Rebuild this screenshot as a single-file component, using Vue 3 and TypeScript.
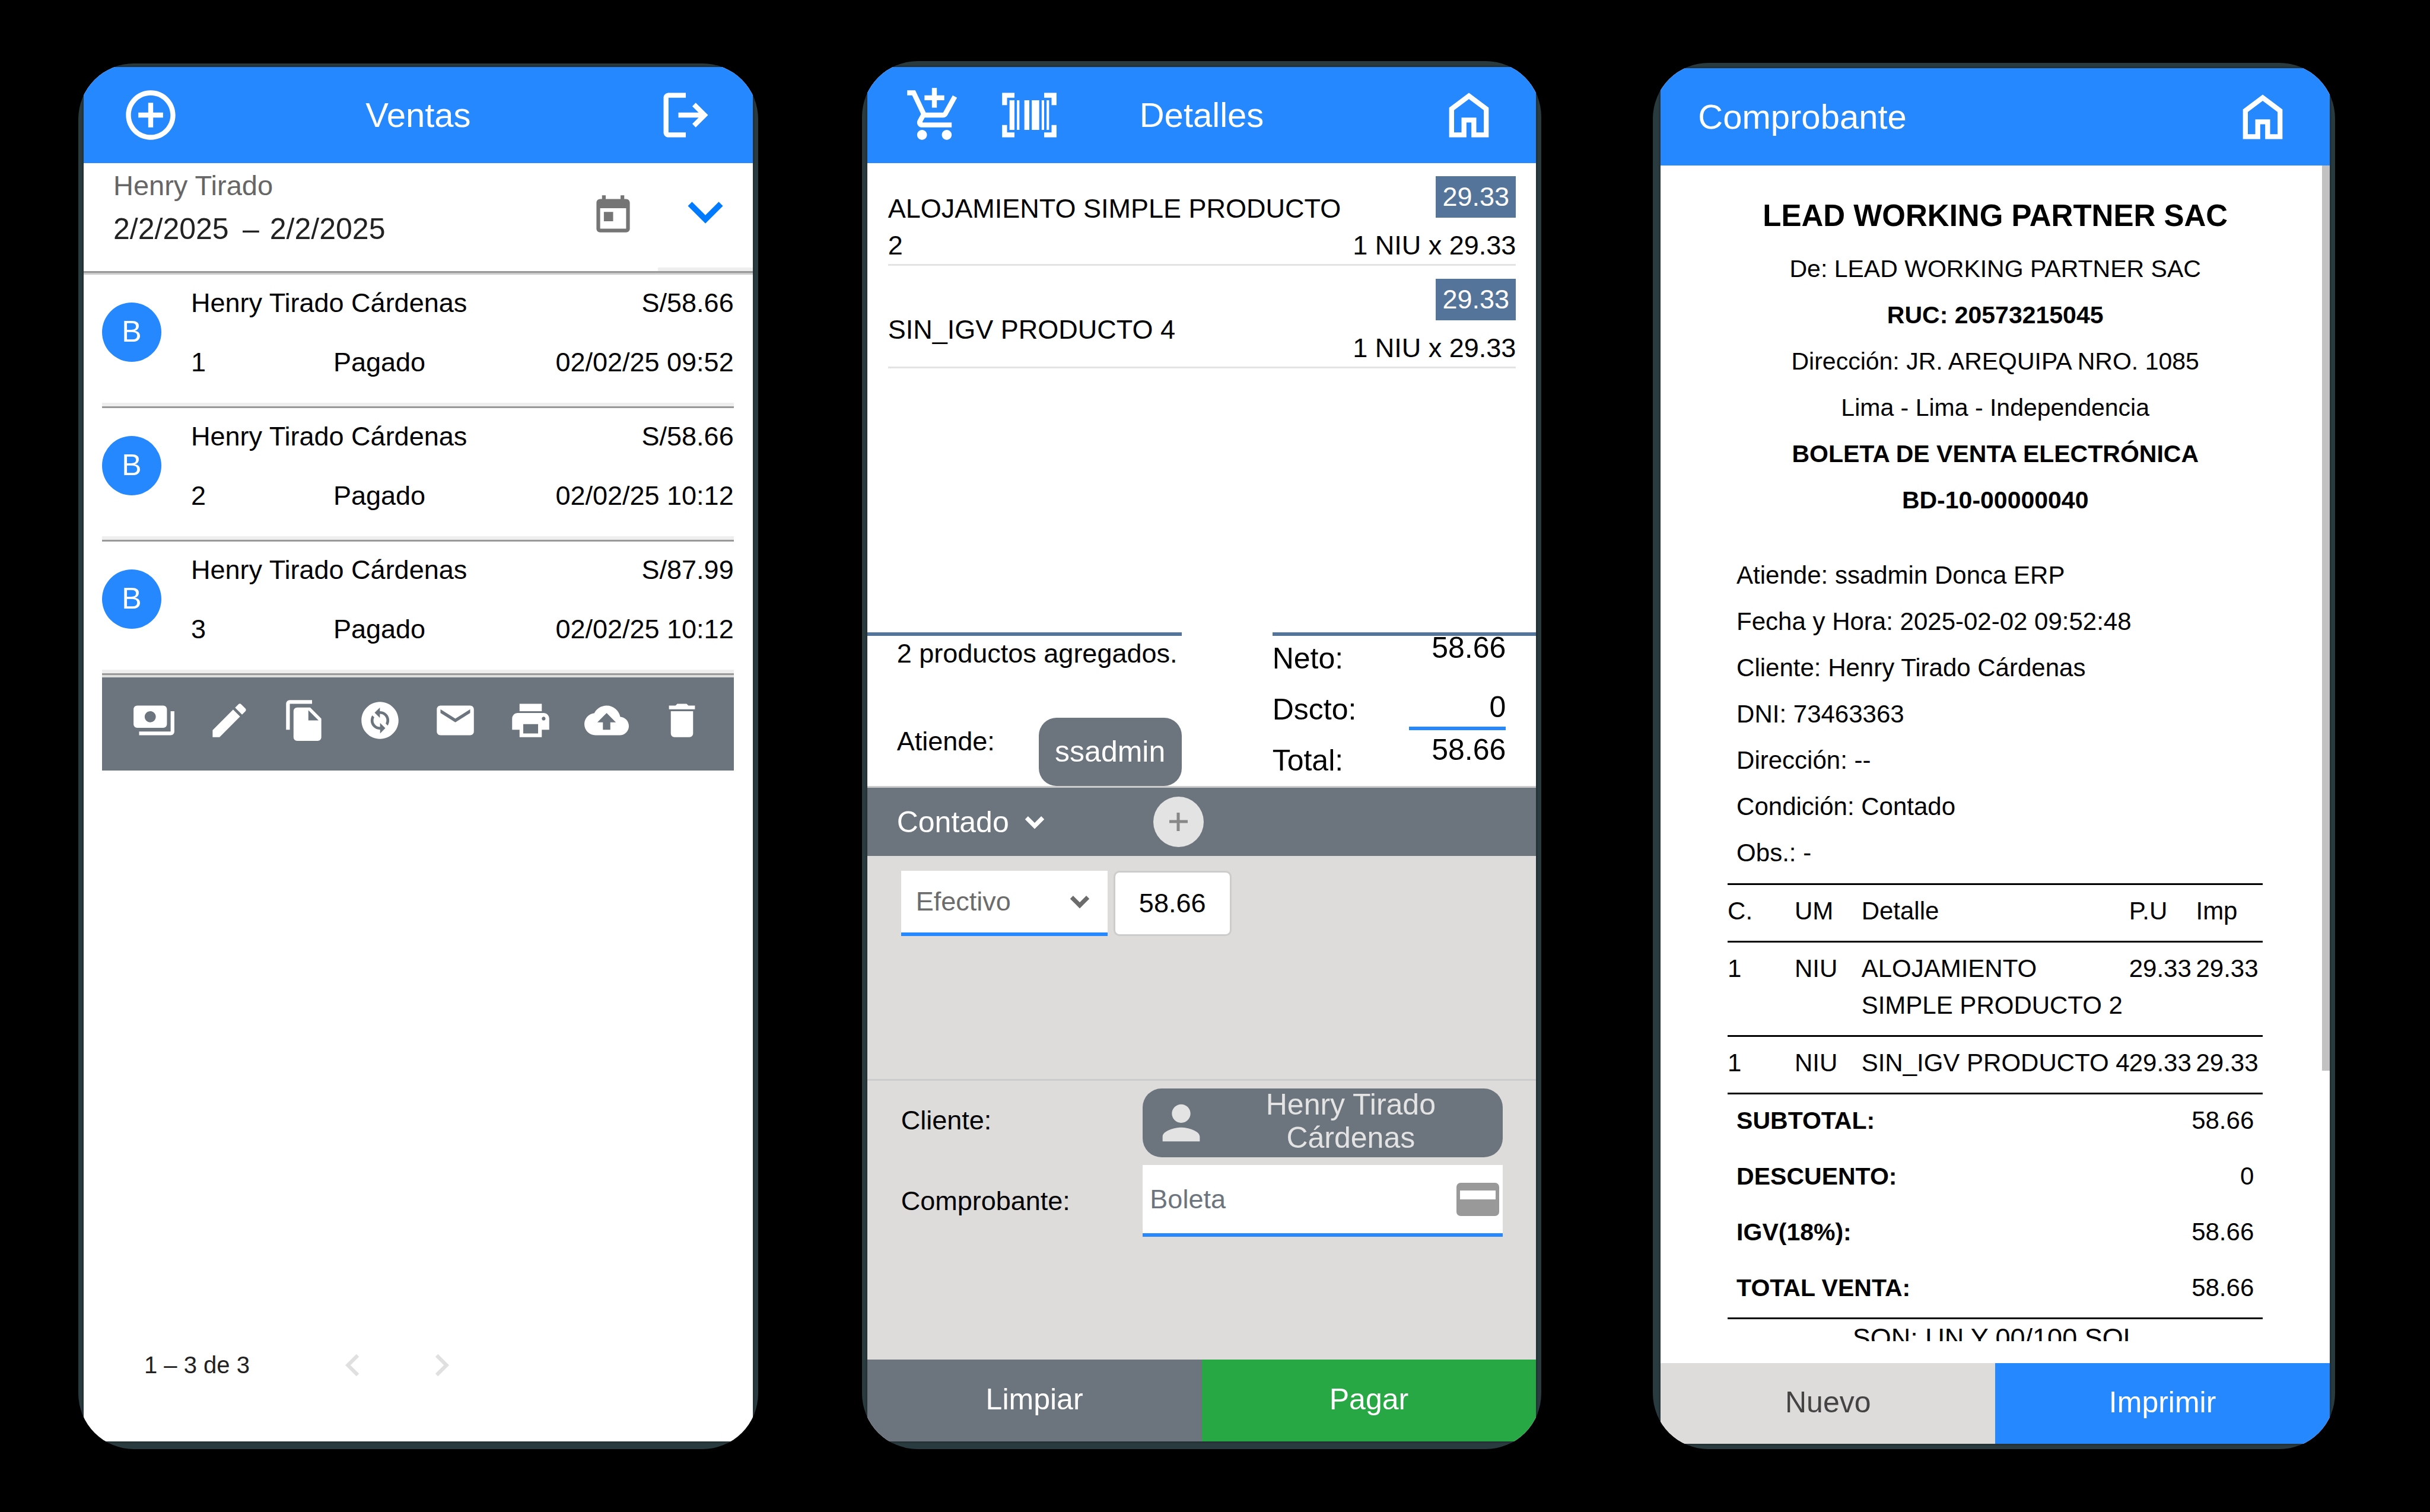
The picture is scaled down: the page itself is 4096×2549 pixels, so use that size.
<script setup lang="ts">
import { ref } from 'vue'

interface Sale {
  number: number
  customer: string
  amount: string
  status: string
  date: string
}

interface Product {
  name: string
  total: string
  detail: string
}

const sales: Sale[] = [
  { number: 1, customer: 'Henry Tirado Cárdenas', amount: 'S/58.66', status: 'Pagado', date: '02/02/25 09:52' },
  { number: 2, customer: 'Henry Tirado Cárdenas', amount: 'S/58.66', status: 'Pagado', date: '02/02/25 10:12' },
  { number: 3, customer: 'Henry Tirado Cárdenas', amount: 'S/87.99', status: 'Pagado', date: '02/02/25 10:12' },
]

const products: Product[] = [
  { name: 'ALOJAMIENTO SIMPLE PRODUCTO 2', total: '29.33', detail: '1 NIU x 29.33' },
  { name: 'SIN_IGV PRODUCTO 4', total: '29.33', detail: '1 NIU x 29.33' },
]

const icons = {
  add: 'M13 7h-2v4H7v2h4v4h2v-4h4v-2h-4V7zm-1-5C6.48 2 2 6.48 2 12s4.48 10 10 10 10-4.48 10-10S17.52 2 12 2zm0 18c-4.41 0-8-3.59-8-8s3.59-8 8-8 8 3.59 8 8-3.59 8-8 8z',
  logout: 'M16 17l-1.375-1.45L17.175 13H9v-2h8.175l-2.55-2.55L16 7l5 5zM5 5h7V3H5c-1.1 0-2 .9-2 2v14c0 1.1.9 2 2 2h7v-2H5V5z',
  calendar: 'M19 3h-1V1h-2v2H8V1H6v2H5c-1.11 0-1.99.9-1.99 2L3 19c0 1.1.89 2 2 2h14c1.1 0 2-.9 2-2V5c0-1.1-.9-2-2-2zm0 16H5V8h14v11zM7 10h5v5H7z',
  down: 'M7.41 8.59L12 13.17l4.59-4.58L18 10l-6 6-6-6z',
  previous: 'M15.41 7.41L14 6l-6 6 6 6 1.41-1.41L10.83 12z',
  next: 'M10 6L8.59 7.41 13.17 12l-4.58 4.59L10 18l6-6z',
  cart: 'M11 9h2V6h3V4h-3V1h-2v3H8v2h3v3zm-4 9c-1.1 0-1.99.9-1.99 2S5.9 22 7 22s2-.9 2-2-.9-2-2-2zm10 0c-1.1 0-1.99.9-1.99 2s.89 2 1.99 2 2-.9 2-2-.9-2-2-2zm-9.83-3.25l.03-.12.9-1.63h7.45c.75 0 1.41-.41 1.75-1.03l3.86-7.01L19.42 4h-.01l-1.1 2-2.76 5H8.53l-.13-.27L6.16 6l-.95-2-.94-2H1v2h2l3.6 7.59-1.35 2.45c-.16.28-.25.61-.25.96 0 1.1.9 2 2 2h12v-2H7.42c-.13 0-.25-.11-.25-.25z',
  barcode: 'M1 3h5v2H3v3H1zM18 3h5v5h-2V5h-3zM1 16h2v3h3v2H1zM21 16h2v5h-5v-2h3zM4 6h2v12H4zM7 6h1v12H7zM10 6h2v12h-2zM13 6h3v12h-3zM17 6h1v12h-1zM19 6h1v12h-1z',
  home: 'M6 19h3v-6h6v6h3v-9l-6-4.5L6 10v9zm-2 2V9l8-6 8 6v12h-7v-6h-2v6H4z',
  person: 'M12 12c2.21 0 4-1.79 4-4s-1.79-4-4-4-4 1.79-4 4 1.79 4 4 4zm0 2c-2.67 0-8 1.34-8 4v2h16v-2c0-2.66-5.33-4-8-4z',
}

const actions = [
  { label: 'Pagos', path: 'M19 14V6c0-1.1-.9-2-2-2H3c-1.1 0-2 .9-2 2v8c0 1.1.9 2 2 2h14c1.1 0 2-.9 2-2zm-9-1c-1.66 0-3-1.34-3-3s1.34-3 3-3 3 1.34 3 3-1.34 3-3 3zm13-6v11c0 1.1-.9 2-2 2H4v-2h17V7h2z' },
  { label: 'Editar', path: 'M3 17.25V21h3.75L17.81 9.94l-3.75-3.75L3 17.25zM20.71 7.04c.39-.39.39-1.02 0-1.41l-2.34-2.34c-.39-.39-1.02-.39-1.41 0l-1.83 1.83 3.75 3.75 1.83-1.83z' },
  { label: 'Copiar', path: 'M16 1H4c-1.1 0-2 .9-2 2v14h2V3h12V1zm-1 4l6 6v10c0 1.1-.9 2-2 2H7.99C6.89 23 6 22.1 6 21l.01-14c0-1.1.89-2 1.99-2h7zm-1 7h5.5L14 6.5V12z' },
  { label: 'Convertir', path: 'M12 2C6.48 2 2 6.48 2 12c0 5.52 4.48 10 10 10s10-4.48 10-10C22 6.48 17.52 2 12 2zM12.06 19v-2.01c-.02 0-.04 0-.06 0-1.28 0-2.56-.49-3.54-1.46-1.71-1.71-1.92-4.35-.64-6.29l1.1 1.1c-.71 1.33-.53 3.01.59 4.13.7.7 1.62 1.03 2.54 1.01v-2.14l2.83 2.83L12.06 19zM16.17 14.76l-1.1-1.1c.71-1.33.53-3.01-.59-4.13C13.79 8.84 12.9 8.5 12 8.5c-.02 0-.04 0-.06 0v2.15L9.11 7.83 11.94 5v2.02c1.3-.02 2.61.45 3.6 1.45 1.7 1.7 1.91 4.35.63 6.29z' },
  { label: 'Enviar por correo', path: 'M20 4H4c-1.1 0-1.99.9-1.99 2L2 18c0 1.1.9 2 2 2h16c1.1 0 2-.9 2-2V6c0-1.1-.9-2-2-2zm0 4l-8 5-8-5V6l8 5 8-5v2z' },
  { label: 'Imprimir', path: 'M19 8H5c-1.66 0-3 1.34-3 3v6h4v4h12v-4h4v-6c0-1.66-1.34-3-3-3zm-3 11H8v-5h8v5zm3-7c-.55 0-1-.45-1-1s.45-1 1-1 1 .45 1 1-.45 1-1 1zm-1-9H6v4h12V3z' },
  { label: 'Subir', path: 'M19.35 10.04C18.67 6.59 15.64 4 12 4 9.11 4 6.6 5.64 5.35 8.04 2.34 8.36 0 10.91 0 14c0 3.31 2.69 6 6 6h13c2.76 0 5-2.24 5-5 0-2.64-2.05-4.78-4.65-4.96zM14 13v4h-4v-4H7l5-5 5 5h-3z' },
  { label: 'Eliminar', path: 'M6 19c0 1.1.9 2 2 2h8c1.1 0 2-.9 2-2V7H6v12zM19 4h-3.5l-1-1h-5l-1 1H5v2h14V4z' },
]

const heading = [
  { text: 'De: LEAD WORKING PARTNER SAC', strong: false },
  { text: 'RUC: 20573215045', strong: true },
  { text: 'Dirección: JR. AREQUIPA NRO. 1085', strong: false },
  { text: 'Lima - Lima - Independencia', strong: false },
  { text: 'BOLETA DE VENTA ELECTRÓNICA', strong: true },
  { text: 'BD-10-00000040', strong: true },
]

const info = [
  'Atiende: ssadmin Donca ERP',
  'Fecha y Hora: 2025-02-02 09:52:48',
  'Cliente: Henry Tirado Cárdenas',
  'DNI: 73463363',
  'Dirección: --',
  'Condición: Contado',
  'Obs.: -',
]

const lines = [
  ['1', 'NIU', 'ALOJAMIENTO\nSIMPLE PRODUCTO 2', '29.33', '29.33'],
  ['1', 'NIU', 'SIN_IGV PRODUCTO 4', '29.33', '29.33'],
]

const totals = [
  { label: 'SUBTOTAL:', value: '58.66' },
  { label: 'DESCUENTO:', value: '0' },
  { label: 'IGV(18%):', value: '58.66' },
  { label: 'TOTAL VENTA:', value: '58.66' },
]

const dateFrom = ref('2/2/2025')
const dateTo = ref('2/2/2025')
const condition = ref('Contado')
const method = ref('Efectivo')
const paid = ref('58.66')
const voucher = ref('Boleta')
</script>

<template>
  <main class="page">
    <section class="phone phone-sales">
      <div class="screen">
        <header class="topbar">
          <div class="side">
            <button class="icon-btn" aria-label="Nueva venta"><svg class="i-lg" viewBox="0 0 24 24"><path :d="icons.add" /></svg></button>
          </div>
          <h1>Ventas</h1>
          <div class="side end">
            <button class="icon-btn" aria-label="Salir"><svg class="i-lg" viewBox="0 0 24 24"><path :d="icons.logout" /></svg></button>
          </div>
        </header>

        <div class="filter">
          <div class="filter-text">
            <label for="date-from">Henry Tirado</label>
            <div class="range">
              <input id="date-from" v-model="dateFrom" type="text" />
              <span>–</span>
              <input v-model="dateTo" type="text" aria-label="Fecha final" />
            </div>
          </div>
          <button class="icon-btn calendar" aria-label="Elegir fechas"><svg class="i-md" viewBox="0 0 24 24"><path :d="icons.calendar" /></svg></button>
          <button class="icon-btn expand" aria-label="Más filtros"><svg class="i-xl" viewBox="0 0 24 24"><path :d="icons.down" /></svg></button>
        </div>

        <ul class="sales">
          <li v-for="sale in sales" :key="sale.number">
            <span class="avatar">B</span>
            <div class="sale">
              <div class="sale-line"><span>{{ sale.customer }}</span><span class="right">{{ sale.amount }}</span></div>
              <div class="sale-line"><span class="num">{{ sale.number }}</span><span>{{ sale.status }}</span><span class="right">{{ sale.date }}</span></div>
            </div>
          </li>
        </ul>

        <div class="actions">
          <button v-for="action in actions" :key="action.label" class="icon-btn" :aria-label="action.label">
            <svg class="i-md" viewBox="0 0 24 24"><path :d="action.path" /></svg>
          </button>
        </div>

        <footer class="pager">
          <span>1 – 3 de 3</span>
          <button class="icon-btn" aria-label="Anterior"><svg class="i-md" viewBox="0 0 24 24"><path :d="icons.previous" /></svg></button>
          <button class="icon-btn" aria-label="Siguiente"><svg class="i-md" viewBox="0 0 24 24"><path :d="icons.next" /></svg></button>
        </footer>
      </div>
    </section>

    <section class="phone phone-detail">
      <div class="screen">
        <header class="topbar">
          <div class="side">
            <button class="icon-btn" aria-label="Agregar producto"><svg class="i-lg" viewBox="0 0 24 24"><path :d="icons.cart" /></svg></button>
            <button class="icon-btn" aria-label="Escanear código"><svg class="i-lg" viewBox="0 0 24 24"><path :d="icons.barcode" /></svg></button>
          </div>
          <h1>Detalles</h1>
          <div class="side end">
            <button class="icon-btn" aria-label="Inicio"><svg class="i-lg" viewBox="0 0 24 24"><path :d="icons.home" /></svg></button>
          </div>
        </header>

        <ul class="products">
          <li v-for="product in products" :key="product.name">
            <span class="product-name">{{ product.name }}</span>
            <div class="product-price">
              <span class="badge">{{ product.total }}</span>
              <span>{{ product.detail }}</span>
            </div>
          </li>
        </ul>

        <div class="summary">
          <div class="summary-left">
            <span>2 productos agregados.</span>
            <div class="attend">
              <span>Atiende:</span>
              <button class="pill">ssadmin</button>
            </div>
          </div>
          <div class="summary-right">
            <div class="labels"><span>Neto:</span><span>Dscto:</span><span>Total:</span></div>
            <div class="values"><span>58.66</span><span class="discount">0</span><span>58.66</span></div>
          </div>
        </div>

        <div class="condition">
          <div class="select-wrap">
            <select v-model="condition" aria-label="Condición de pago"><option>Contado</option></select>
            <svg class="i-sm" viewBox="0 0 24 24"><path :d="icons.down" /></svg>
          </div>
          <button class="plus" aria-label="Agregar pago"><svg viewBox="0 0 85 85"><path d="M42 27v31M27 42h31" /></svg></button>
        </div>

        <div class="payments">
          <div class="select-wrap method">
            <select v-model="method" aria-label="Medio de pago"><option>Efectivo</option></select>
            <svg class="i-sm" viewBox="0 0 24 24"><path :d="icons.down" /></svg>
          </div>
          <input v-model="paid" class="paid" type="text" aria-label="Monto" />
        </div>

        <div class="client">
          <span class="client-label">Cliente:</span>
          <button class="client-btn">
            <svg viewBox="0 0 24 24"><path :d="icons.person" /></svg>
            <span>Henry Tirado Cárdenas</span>
          </button>
          <label for="voucher">Comprobante:</label>
          <div class="voucher">
            <input id="voucher" v-model="voucher" type="text" />
            <svg viewBox="0 0 74 56"><rect x="1" width="72" height="56" rx="7" /><path d="M7 13h60v15H7z" fill="#fff" /></svg>
          </div>
        </div>

        <footer class="buttons">
          <button class="grey">Limpiar</button>
          <button class="green">Pagar</button>
        </footer>
      </div>
    </section>

    <section class="phone phone-receipt">
      <div class="screen">
        <header class="topbar left">
          <h1>Comprobante</h1>
          <button class="icon-btn" aria-label="Inicio"><svg class="i-lg" viewBox="0 0 24 24"><path :d="icons.home" /></svg></button>
        </header>

        <div class="viewport">
          <article class="receipt">
            <h2>LEAD WORKING PARTNER SAC</h2>
            <p v-for="row in heading" :key="row.text" :class="{ strong: row.strong }">{{ row.text }}</p>
            <div class="info">
              <p v-for="row in info" :key="row">{{ row }}</p>
            </div>
            <table>
              <thead>
                <tr><th class="c1">C.</th><th class="c1">UM</th><th class="c4">Detalle</th><th class="c1">P.U</th><th class="c1">Imp</th></tr>
              </thead>
              <tbody>
                <tr v-for="line in lines" :key="line[2]"><td v-for="(cell, i) in line" :key="i">{{ cell }}</td></tr>
              </tbody>
            </table>
            <dl>
              <div v-for="total in totals" :key="total.label"><dt>{{ total.label }}</dt><dd>{{ total.value }}</dd></div>
            </dl>
            <p class="words">SON: UN Y 00/100 SOL</p>
          </article>
          <div class="thumb"></div>
        </div>

        <footer class="buttons">
          <button class="light">Nuevo</button>
          <button class="blue">Imprimir</button>
        </footer>
      </div>
    </section>
  </main>
</template>

<style>
body {
  margin: 0;
  background: #000;
}
</style>

<style scoped>
* {
  box-sizing: border-box;
}

.page {
  display: flex;
  min-height: 100vh;
  padding: 103px 160px 106px 132px;
  background: #000;
  color: #000;
  font-family: "Liberation Sans", Arial, sans-serif;
  font-size: 45px;
  line-height: 60px;
}

button,
input,
select {
  margin: 0;
  padding: 0;
  border: 0;
  border-radius: 0;
  background: none;
  color: inherit;
  font: inherit;
}

ul,
h1,
h2,
p,
dl,
dd {
  margin: 0;
  padding: 0;
  list-style: none;
}

svg {
  display: block;
  flex: none;
  fill: currentColor;
}

/* Device frame */
.phone {
  display: flex;
  flex: 1 1 0;
  min-width: 0;
  overflow: hidden;
  border-radius: 94px;
  background: #2a3b40;
}

.phone-sales {
  margin: 4px 175px 0 0;
  padding: 6px 9px 13px;
}

.phone-detail {
  margin-right: 188px;
  padding: 10px 9px 13px;
}

.phone-receipt {
  flex-basis: 3px;
  margin-top: 3px;
  padding: 9px 9px 9px 13px;
}

.screen {
  display: flex;
  flex: 1;
  flex-direction: column;
  min-width: 0;
  background: #fff;
  box-shadow: 0 0 0 3px #263336;
}

.topbar {
  display: grid;
  flex: none;
  grid-template-columns: 1fr auto 1fr;
  align-items: center;
  height: 162px;
  padding: 0 63px;
  background: #2688ff;
  color: #fff;
}

.topbar.left {
  grid-template-columns: 1fr auto;
}

.topbar h1 {
  font-size: 58px;
  font-weight: 400;
}

.side {
  display: flex;
  gap: 60px;
}

.side.end {
  justify-content: flex-end;
}

.icon-btn {
  display: flex;
  align-items: center;
  justify-content: center;
}

.i-sm {
  width: 58px;
  height: 58px;
}

.i-sm path {
  stroke: currentColor;
  stroke-width: 1;
}

.i-md {
  width: 75px;
  height: 75px;
}

.i-lg {
  width: 100px;
  height: 100px;
}

.i-xl {
  width: 118px;
  height: 118px;
}

/* Sales list */
.filter {
  display: flex;
  flex: none;
  height: 185px;
  margin-bottom: 3px;
  padding-left: 50px;
  border-bottom: 3px solid #999;
  box-shadow: 0 3px #ccc;
}

.filter-text {
  display: flex;
  flex: 1;
  flex-direction: column;
  gap: 13px;
  min-width: 0;
  padding-top: 8px;
}

.filter-text label {
  color: #666;
  font-size: 47px;
}

.range {
  display: flex;
  gap: 18px;
  color: #222;
  font-size: 50px;
}

.range input {
  width: 200px;
  height: 60px;
}

.calendar {
  margin-right: 38px;
  padding-bottom: 6px;
  color: #757575;
}

.expand {
  width: 160px;
  padding-bottom: 18px;
  box-shadow: inset 0 -6px #eee;
  color: #007bff;
}

.sales {
  margin: 0 32px 0 31px;
}

.sales li {
  display: flex;
  gap: 50px;
  height: 225px;
  border-bottom: 3px solid #999;
  box-shadow: inset 0 -6px #eee;
}

.avatar {
  width: 100px;
  height: 100px;
  margin-top: 47px;
  border-radius: 50%;
  background: #2688ff;
  color: #fff;
  font-size: 50px;
  line-height: 98px;
  text-align: center;
}

.sale {
  display: flex;
  flex: 1;
  flex-direction: column;
  gap: 40px;
  padding-top: 18px;
}

.sale-line {
  display: flex;
}

.num {
  width: 240px;
}

.right {
  margin-left: auto;
}

.actions {
  display: flex;
  justify-content: space-between;
  height: 161px;
  margin: 0 32px 0 31px;
  padding: 0 50px 12px;
  border-top: 4px solid #ddd;
  background: #6c757d;
  color: #fff;
}

.pager {
  display: flex;
  align-items: center;
  margin-top: auto;
  padding: 0 0 54px 102px;
  color: #222;
  font-size: 40px;
}

.pager span {
  width: 276px;
}

.pager button {
  width: 150px;
  height: 150px;
  color: #e0e0e0;
}

/* Sale detail */
.products {
  flex: 1;
  padding: 0 34px 0 35px;
}

.products li {
  display: grid;
  grid-template-columns: 1fr auto;
  align-items: center;
  padding-top: 22px;
  border-bottom: 3px solid #e3e3e3;
}

.product-name {
  padding-top: 24px;
  line-height: 62px;
}

.product-price {
  display: flex;
  flex-direction: column;
  gap: 16px;
  align-items: flex-end;
  line-height: 62px;
}

.badge {
  width: 135px;
  height: 70px;
  background: #55749a;
  color: #fff;
  line-height: 70px;
  text-align: center;
}

.summary {
  display: flex;
  gap: 153px;
  height: 262px;
  border-bottom: 3px solid #ccc;
}

.summary-left {
  display: flex;
  flex-direction: column;
  justify-content: space-between;
  width: 530px;
  padding-left: 50px;
  border-top: 6px solid #55749a;
}

.attend {
  display: flex;
  justify-content: space-between;
}

.attend span {
  padding-top: 10px;
}

.pill {
  width: 241px;
  height: 115px;
  padding-bottom: 2px;
  border-radius: 30px;
  background: #6c757d;
  color: #fff;
  font-size: 50px;
}

.summary-right {
  display: flex;
  flex: 1;
  justify-content: space-between;
  padding-right: 51px;
  border-top: 6px solid #55749a;
  font-size: 50px;
}

.labels,
.values {
  display: flex;
  flex-direction: column;
}

.labels {
  gap: 10px;
  line-height: 76px;
}

.values {
  width: 163px;
  line-height: 40px;
  text-align: right;
}

.discount {
  margin: 60px 0 13px;
  padding-bottom: 13px;
  border-bottom: 6px solid #2688ff;
}

.condition {
  display: flex;
  gap: 171px;
  align-items: center;
  height: 115px;
  padding-left: 50px;
  background: #6c757d;
  color: #fff;
  font-size: 50px;
}

.select-wrap {
  position: relative;
  width: 261px;
}

.select-wrap select {
  display: block;
  width: 100%;
  height: 100%;
  appearance: none;
}

.select-wrap svg {
  position: absolute;
  top: calc(50% - 29px);
  right: 0;
  pointer-events: none;
}

.plus {
  width: 85px;
  height: 85px;
  border-radius: 50%;
  background: #e3e3e3;
}

.plus path {
  fill: none;
  stroke: #888;
  stroke-width: 5;
}

.payments {
  display: flex;
  gap: 10px;
  height: 376px;
  padding: 25px 57px;
  background: #dddcda;
}

.method {
  width: 348px;
  height: 110px;
  padding-left: 25px;
  border-bottom: 6px solid #2688ff;
  background: #fff;
  color: #6c6c6c;
}

.method svg {
  right: 18px;
}

.paid {
  width: 199px;
  height: 110px;
  border: 3px solid #ccc;
  border-radius: 10px;
  background: #fff;
  text-align: center;
}

.client {
  display: grid;
  grid-template-columns: 1fr 607px;
  gap: 13px 0;
  align-content: start;
  align-items: center;
  height: 473px;
  padding: 13px 56px 0 57px;
  border-top: 3px solid #ccc;
  background: #dddcda;
}

.client-label {
  padding-bottom: 8px;
}

.client-btn {
  display: flex;
  align-items: center;
  height: 116px;
  padding: 0 18px;
  border-radius: 32px;
  background: #6c757d;
  color: #e3e3e3;
  font-size: 50px;
  line-height: 56px;
}

.client-btn svg {
  width: 94px;
  height: 94px;
}

.client-btn span {
  flex: 1;
  padding-bottom: 6px;
}

.voucher {
  position: relative;
  height: 121px;
}

.voucher input {
  width: 100%;
  height: 100%;
  padding-left: 12px;
  border-bottom: 6px solid #2688ff;
  background: #fff;
  color: #6c757d;
}

.voucher svg {
  position: absolute;
  top: 30px;
  right: 5px;
  width: 74px;
  height: 56px;
  fill: #999;
}

.buttons {
  display: flex;
  flex: none;
  height: 138px;
  font-size: 50px;
}

.buttons button {
  flex: 1;
  padding-bottom: 4px;
}

.grey {
  background: #6c757d;
  color: #fff;
}

.green {
  background: #28a745;
  color: #fff;
}

.light {
  background: #dddcda;
  color: #444;
}

.blue {
  background: #2688ff;
  color: #fff;
}

/* Receipt */
.phone-receipt .topbar {
  height: 164px;
}

.phone-receipt .buttons {
  height: 136px;
}

.viewport {
  position: relative;
  flex: 1 1 0;
  min-height: 0;
  margin-bottom: 37px;
  overflow: hidden;
}

.thumb {
  position: absolute;
  top: 0;
  right: 0;
  width: 13px;
  height: 77%;
  background: #c1c1c1;
}

.receipt {
  padding: 46px 10%;
  font-size: 41px;
  line-height: 78px;
  text-align: center;
}

.receipt h2 {
  margin-bottom: 11px;
  font-size: 51px;
  font-weight: 700;
}

.strong {
  font-weight: 700;
}

.info {
  padding: 49px 14px 12px 15px;
  font-size: 42px;
  text-align: left;
}

table {
  width: 100%;
  border-top: 3px solid #000;
  border-collapse: separate;
  border-spacing: 0;
  font-size: 42px;
  line-height: 62px;
  table-layout: fixed;
  text-align: left;
}

th,
td {
  padding: 13px 0 19px;
  border-bottom: 3px solid #000;
  font-weight: 400;
  vertical-align: top;
  white-space: pre;
}

.c1 {
  width: 12.5%;
}

.c4 {
  width: 50%;
}

dl {
  border-bottom: 3px solid #000;
  line-height: 62px;
}

dl div {
  display: flex;
  justify-content: space-between;
  padding: 13px 15px 19px;
}

dt {
  font-weight: 700;
}

dd {
  font-size: 42px;
}

.words {
  padding-top: 2px;
  font-size: 45px;
  line-height: 60px;
}
</style>
